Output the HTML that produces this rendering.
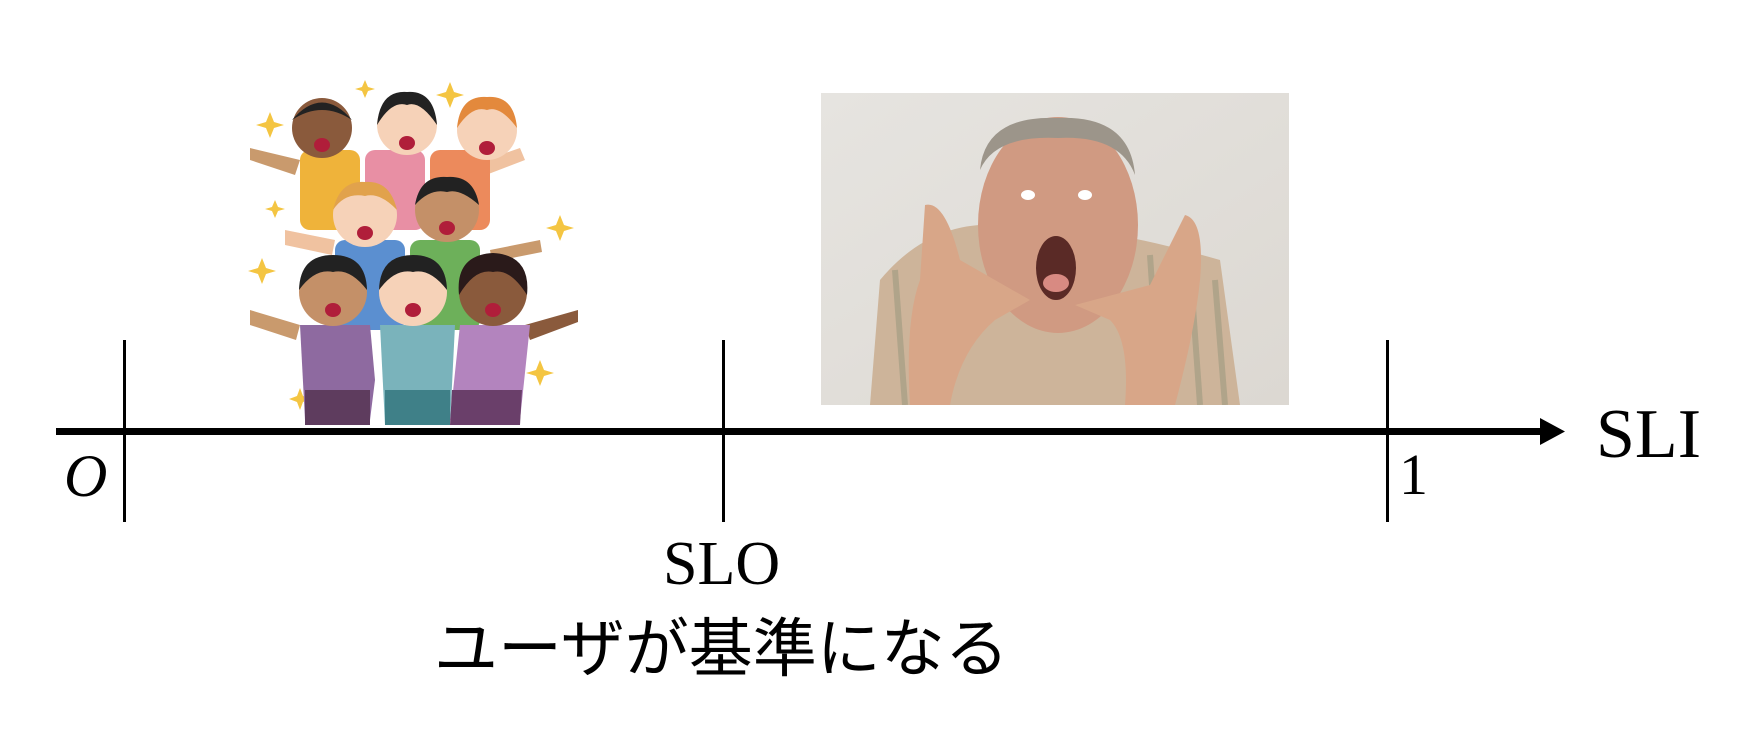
<!DOCTYPE html>
<html><head><meta charset="utf-8"><style>
html,body{margin:0;padding:0;background:#fff;}
body{width:1744px;height:754px;position:relative;overflow:hidden;}
.t{position:absolute;font-family:"Liberation Serif",serif;color:#000;line-height:1;}
</style></head><body>
<svg width="1744" height="754" style="position:absolute;left:0;top:0">
<rect x="56" y="428" width="1490" height="7" fill="#000"/>
<polygon points="1540,418 1565,431.5 1540,445" fill="#000"/>
<rect x="123" y="340" width="3" height="182" fill="#000"/>
<rect x="722" y="340" width="3" height="182" fill="#000"/>
<rect x="1386" y="340" width="3" height="182" fill="#000"/>

<defs>
<linearGradient id="bg" x1="0" y1="0" x2="1" y2="1"><stop offset="0" stop-color="#e6e4e0"/><stop offset="1" stop-color="#dcd8d2"/></linearGradient>
<clipPath id="pc"><rect x="821" y="93" width="468" height="312"/></clipPath>
</defs>
<g clip-path="url(#pc)">
<rect x="821" y="93" width="468" height="312" fill="url(#bg)"/>
<path d="M870 405 L880 280 Q930 220 1000 225 Q1080 220 1220 260 L1240 405 Z" fill="#cdb49a"/>
<g stroke="#9e9a80" stroke-width="6" opacity="0.6">
<line x1="895" y1="270" x2="905" y2="405"/><line x1="930" y1="260" x2="940" y2="405"/><line x1="1150" y1="255" x2="1160" y2="405"/><line x1="1190" y1="265" x2="1200" y2="405"/><line x1="1215" y1="280" x2="1225" y2="405"/>
</g>
<ellipse cx="1058" cy="225" rx="80" ry="108" fill="#d09a82"/>
<path d="M980 170 Q985 115 1058 118 Q1130 115 1135 175 Q1120 135 1058 138 Q995 135 980 170Z" fill="#9c958a"/>
<ellipse cx="1028" cy="195" rx="7" ry="5" fill="#fff"/><ellipse cx="1085" cy="195" rx="7" ry="5" fill="#fff"/>
<ellipse cx="1056" cy="268" rx="20" ry="32" fill="#5a2a26"/>
<ellipse cx="1056" cy="283" rx="13" ry="9" fill="#d88a82"/>
<path d="M925 205 Q945 200 960 260 L1030 300 L995 320 Q960 350 950 405 L910 405 Q905 320 920 280 Z" fill="#d8a688"/>
<path d="M1185 215 Q1205 220 1200 280 Q1195 330 1175 405 L1125 405 Q1130 340 1110 320 L1075 305 L1150 285 Z" fill="#d8a688"/>
</g>

<g>
<g fill="#f4c542">
<path d="M270 112 l4 10 10 3 -10 3 -4 10 -4 -10 -10 -3 10 -3z"/>
<path d="M450 82 l4 10 10 3 -10 3 -4 10 -4 -10 -10 -3 10 -3z"/>
<path d="M365 80 l3 7 7 2 -7 2 -3 7 -3 -7 -7 -2 7 -2z"/>
<path d="M262 258 l4 10 10 3 -10 3 -4 10 -4 -10 -10 -3 10 -3z"/>
<path d="M560 215 l4 10 10 3 -10 3 -4 10 -4 -10 -10 -3 10 -3z"/>
<path d="M300 388 l3 8 8 3 -8 3 -3 8 -3 -8 -8 -3 8 -3z"/>
<path d="M540 360 l4 10 10 3 -10 3 -4 10 -4 -10 -10 -3 10 -3z"/>
<path d="M275 200 l3 7 7 2 -7 2 -3 7 -3 -7 -7 -2 7 -2z"/>
</g>
<path d="M250 148 L300 160 L295 175 L250 160Z" fill="#c99a6d"/>
<path d="M520 148 L470 165 L478 178 L525 160Z" fill="#f0c2a0"/>
<rect x="300" y="150" width="60" height="80" rx="10" fill="#efb33a"/>
<rect x="365" y="150" width="60" height="80" rx="10" fill="#e88fa4"/>
<rect x="430" y="150" width="60" height="80" rx="10" fill="#ec8a5c"/>
<circle cx="322" cy="128" r="30" fill="#8a5a3c"/><path d="M292 120 Q322 85 352 120 Q322 100 292 120Z" fill="#222"/>
<circle cx="407" cy="125" r="30" fill="#f6d2b8"/><path d="M377 125 Q380 90 407 92 Q434 90 437 125 Q420 100 407 105 Q392 100 377 125Z" fill="#222"/>
<circle cx="487" cy="130" r="30" fill="#f6d2b8"/><path d="M457 128 Q460 95 487 97 Q514 95 517 128 Q500 105 487 110 Q472 105 457 128Z" fill="#e3893c"/>
<path d="M285 230 L335 240 L332 255 L285 245Z" fill="#f0c2a0"/>
<path d="M540 240 L490 250 L492 262 L542 252Z" fill="#c99a6d"/>
<rect x="335" y="240" width="70" height="90" rx="10" fill="#5b8fd0"/>
<rect x="410" y="240" width="70" height="90" rx="10" fill="#6db05a"/>
<circle cx="365" cy="215" r="32" fill="#f6d2b8"/><path d="M333 210 Q340 180 365 182 Q390 180 397 210 Q380 192 365 196 Q345 192 333 210Z" fill="#e1a24c"/>
<circle cx="447" cy="210" r="32" fill="#c49068"/><path d="M415 205 Q420 175 447 177 Q474 175 479 205 Q460 188 447 192 Q430 188 415 205Z" fill="#222"/>
<path d="M250 310 L300 325 L296 340 L250 325Z" fill="#c99a6d"/>
<path d="M578 310 L525 325 L530 340 L578 322Z" fill="#8a5a3c"/>
<path d="M300 325 L370 325 L375 380 L370 420 L305 420 Z" fill="#8e6aa0"/>
<path d="M305 390 L370 390 L370 425 L305 425Z" fill="#5e3c5e"/>
<path d="M380 325 L455 325 L450 425 L385 425Z" fill="#7ab3bb"/>
<path d="M385 390 L450 390 L450 425 L385 425Z" fill="#3f8088"/>
<path d="M460 325 L530 325 L520 420 L450 420Z" fill="#b384be"/>
<path d="M452 390 L522 390 L520 425 L450 425Z" fill="#6a3f6a"/>
<circle cx="333" cy="292" r="34" fill="#c49068"/><path d="M299 290 Q300 255 333 255 Q366 255 367 290 Q350 268 333 272 Q315 268 299 290Z" fill="#222"/>
<circle cx="413" cy="292" r="34" fill="#f6d2b8"/><path d="M379 290 Q380 255 413 255 Q446 255 447 290 Q430 268 413 272 Q395 268 379 290Z" fill="#222"/>
<circle cx="493" cy="292" r="34" fill="#8a5a3c"/><path d="M459 295 Q455 255 493 253 Q531 255 527 295 Q510 268 493 272 Q475 268 459 295Z" fill="#2a1a1a"/>
<g fill="#b01e3a"><ellipse cx="322" cy="145" rx="8" ry="7"/><ellipse cx="407" cy="143" rx="8" ry="7"/><ellipse cx="487" cy="148" rx="8" ry="7"/><ellipse cx="365" cy="233" rx="8" ry="7"/><ellipse cx="447" cy="228" rx="8" ry="7"/><ellipse cx="333" cy="310" rx="8" ry="7"/><ellipse cx="413" cy="310" rx="8" ry="7"/><ellipse cx="493" cy="310" rx="8" ry="7"/></g>
</g>
</svg>
<div class="t" style="left:1596px;top:400px;font-size:70px;">SLI</div>
<div class="t" style="left:1399px;top:446px;font-size:58px;">1</div>
<div class="t" style="left:64px;top:446px;font-size:60px;font-style:italic;">O</div>
<div class="t" style="left:663px;top:533px;font-size:62px;">SLO</div>
<div class="t" style="left:434px;top:617px;font-size:64px;font-family:'Liberation Sans','Noto Sans CJK JP',sans-serif;white-space:nowrap;">ユーザが基準になる</div>
</body></html>
